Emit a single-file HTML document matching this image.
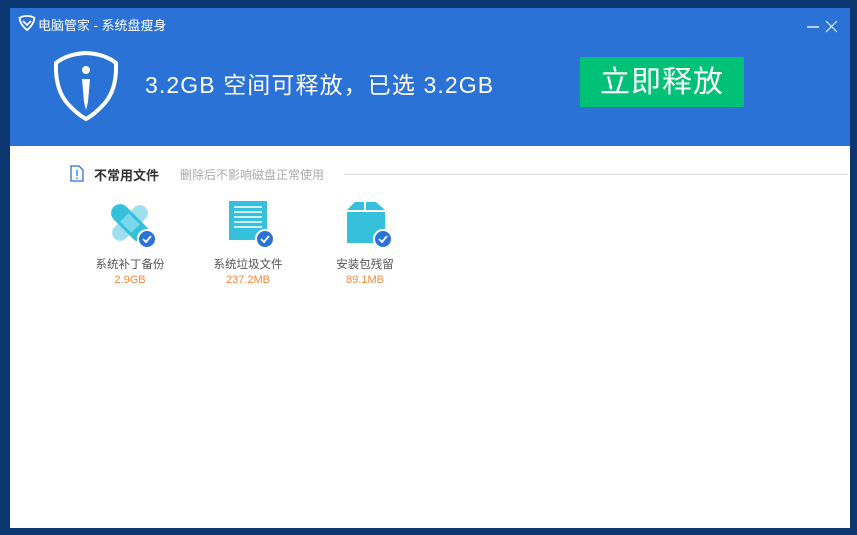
<!DOCTYPE html>
<html><head><meta charset="utf-8"><style>
*{margin:0;padding:0;box-sizing:border-box}
body{width:857px;height:535px;background:#0c3670;position:relative;overflow:hidden;font-family:"Liberation Sans","Noto Sans CJK SC",sans-serif}
.win{position:absolute;left:10px;top:8px;width:840px;height:520px;background:#fff}
.hd{position:absolute;left:0;top:0;width:840px;height:138px;background:#2a72d5}
.t{position:absolute;left:28px;top:7px;color:#fff;font-size:13px}
.big{position:absolute;left:135px;top:58px;color:#fff;font-size:23px;letter-spacing:1.1px}
.btn{position:absolute;left:570px;top:49px;width:164px;height:50px;background:#00c176;color:#fff;font-size:30px;text-align:center;line-height:52px;letter-spacing:1px}
.sec{position:absolute;top:157px;font-size:13px}
.item{position:absolute;top:248px;width:120px;text-align:center;font-size:11.5px;color:#555}
.item b{display:block;font-weight:normal;color:#f7883b;margin-top:2px;font-size:11px}
.chk{position:absolute;width:20px;height:20px;border-radius:50%;background:#2a72d5;border:2px solid #fff}
</style></head><body>
<div class="win">
<div class="hd">
<svg style="position:absolute;left:8px;top:7px" width="18" height="16" viewBox="0 0 18 16"><path d="M9 1 Q4 1 1.5 3 L2.5 7 Q5 12 9 15 Q13 12 15.5 7 L16.5 3 Q14 1 9 1Z" fill="none" stroke="#fff" stroke-width="1.8"/><path d="M5 6 L9 10 L13 6" fill="none" stroke="#fff" stroke-width="1.8"/></svg>
<div class="t">电脑管家 - 系统盘瘦身</div>
<svg style="position:absolute;left:797px;top:12px" width="30" height="14"><line x1="0" y1="7" x2="12" y2="7" stroke="#fff" stroke-width="1.3"/><line x1="19" y1="1" x2="30" y2="12" stroke="#fff"/><line x1="30" y1="1" x2="19" y2="12" stroke="#fff"/></svg>
<svg style="position:absolute;left:43px;top:42px" width="66" height="72" viewBox="0 0 66 72"><path d="M33 3 Q14 4 3 13 Q2 40 15 54 Q24 64 33 69 Q42 64 51 54 Q64 40 63 13 Q52 4 33 3Z" fill="none" stroke="#fff" stroke-width="4"/><circle cx="33" cy="20" r="4" fill="#fff"/><path d="M29 29 L37 29 L35 52 L33 60 L31 52Z" fill="#fff"/></svg>
<div class="big">3.2GB 空间可释放，已选 3.2GB</div>
<div class="btn">立即释放</div>
</div>
<svg style="position:absolute;left:60px;top:157px" width="14" height="17"><path d="M1 1 H9 L13 5 V16 H1Z" fill="none" stroke="#2a72d5" stroke-width="1.3"/><line x1="7" y1="5" x2="7" y2="11" stroke="#2a72d5" stroke-width="1.3"/><rect x="6.4" y="12.5" width="1.3" height="1.5" fill="#2a72d5"/></svg>
<div class="sec" style="left:84px;color:#333;font-weight:bold">不常用文件</div>
<div class="sec" style="left:170px;color:#aaa;font-size:12px;top:158px">删除后不影响磁盘正常使用</div>
<div style="position:absolute;left:334px;top:166px;width:504px;height:1px;background:#ddd"></div>

<svg style="position:absolute;left:98px;top:193px" width="44" height="44" viewBox="0 0 44 44"><g transform="rotate(45 22 22)"><rect x="14" y="0" width="16" height="44" rx="8" fill="#9fe0ee"/></g><g transform="rotate(-45 22 22)"><rect x="13" y="-1" width="18" height="46" rx="9" fill="#35c0dc"/><rect x="16" y="14" width="12" height="16" fill="#79d8ea"/></g></svg>
<div class="chk" style="left:127px;top:221px"><svg width="16" height="16"><path d="M4 8 L7 11 L12 5" fill="none" stroke="#fff" stroke-width="1.8"/></svg></div>
<svg style="position:absolute;left:219px;top:193px" width="40" height="40"><rect x="0" y="0" width="38" height="39" fill="#35c0dc"/><g stroke="#fff" stroke-width="1.6"><line x1="5" y1="6" x2="33" y2="6"/><line x1="5" y1="11" x2="33" y2="11"/><line x1="5" y1="16" x2="33" y2="16"/><line x1="5" y1="21" x2="33" y2="21"/><line x1="5" y1="26" x2="33" y2="26"/></g></svg>
<div class="chk" style="left:245px;top:221px"><svg width="16" height="16"><path d="M4 8 L7 11 L12 5" fill="none" stroke="#fff" stroke-width="1.8"/></svg></div>
<svg style="position:absolute;left:336px;top:194px" width="40" height="42"><path d="M1 8 L9 0 L18 0 L18 8Z M20 0 L30 0 L39 8 L20 8Z" fill="#35c0dc"/><rect x="1" y="10" width="38" height="31" fill="#35c0dc"/></svg>
<div class="chk" style="left:363px;top:221px"><svg width="16" height="16"><path d="M4 8 L7 11 L12 5" fill="none" stroke="#fff" stroke-width="1.8"/></svg></div>

<div class="item" style="left:60px">系统补丁备份<b>2.9GB</b></div>
<div class="item" style="left:178px">系统垃圾文件<b>237.2MB</b></div>
<div class="item" style="left:295px">安装包残留<b>89.1MB</b></div>
</div>
</body></html>
